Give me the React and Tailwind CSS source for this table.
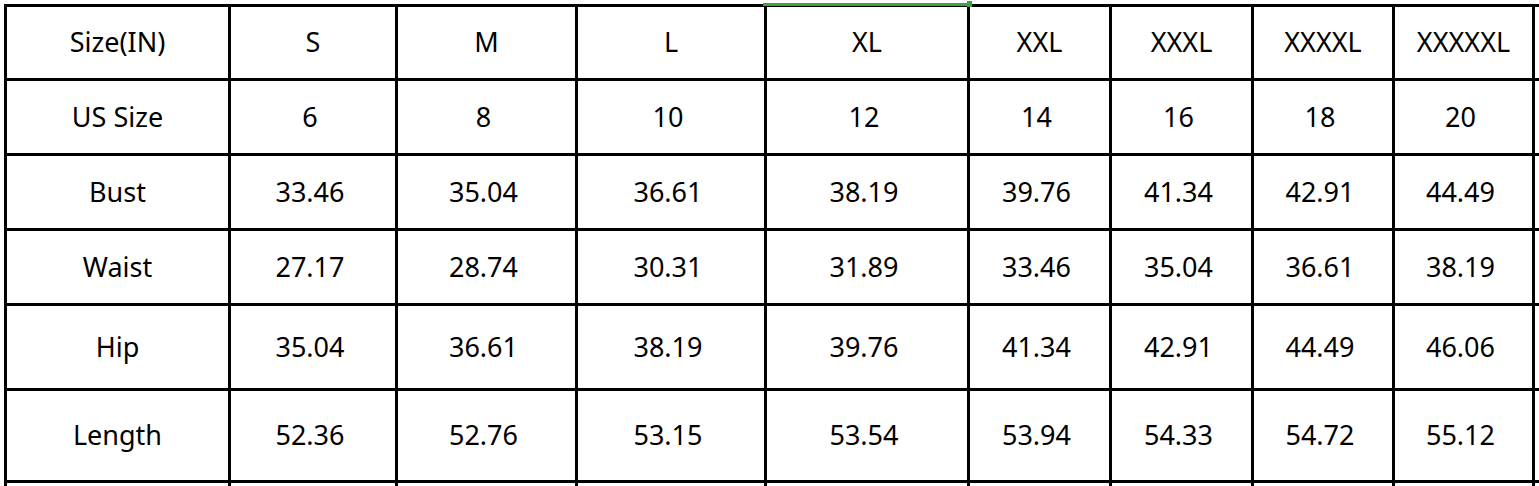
import React from "react";

const header = ["Size(IN)", "S", "M", "L", "XL", "XXL", "XXXL", "XXXXL", "XXXXXL"];

const rows = [
  ["US Size", "6", "8", "10", "12", "14", "16", "18", "20"],
  ["Bust", "33.46", "35.04", "36.61", "38.19", "39.76", "41.34", "42.91", "44.49"],
  ["Waist", "27.17", "28.74", "30.31", "31.89", "33.46", "35.04", "36.61", "38.19"],
  ["Hip", "35.04", "36.61", "38.19", "39.76", "41.34", "42.91", "44.49", "46.06"],
  ["Length", "52.36", "52.76", "53.15", "53.54", "53.94", "54.33", "54.72", "55.12"],
];

function Cell({ children, num }) {
  return (
    <div
      className={
        "bg-white flex items-center justify-center text-[27px] text-black leading-none pb-[2px]" +
        (num ? " pr-[6px]" : "")
      }
    >
      {children}
    </div>
  );
}

export default function App() {
  return (
    <div
      className="w-[1539px] h-[486px] overflow-hidden bg-white relative"
      style={{ fontFamily: '"Noto Sans", "Open Sans", sans-serif' }}
    >
      <div className="ml-[4px] mt-[4px] w-max bg-black p-[3px] pr-0 grid gap-[3px] grid-cols-[221px_164px_177px_186px_200px_139px_139px_138px_137px_120px] grid-rows-[71px_72px_72px_72px_82px_89px_80px]">
        {header.map((h) => (
          <Cell key={h}>{h}</Cell>
        ))}
        <Cell />
        {rows.map((r) => (
          <React.Fragment key={r[0]}>
            {r.map((v, i) => (
              <Cell key={i} num={i > 0}>
                {v}
              </Cell>
            ))}
            <Cell />
          </React.Fragment>
        ))}
        {Array.from({ length: 10 }).map((_, i) => (
          <Cell key={"e" + i} />
        ))}
      </div>
      {/* selected cell top edge */}
      <div className="absolute left-[763px] top-[3px] w-[206px] h-[3px] bg-[#3fa33f]" />
      <div className="absolute left-[967px] top-[1px] w-[5px] h-[6px] bg-[#3fa33f]" />
    </div>
  );
}
